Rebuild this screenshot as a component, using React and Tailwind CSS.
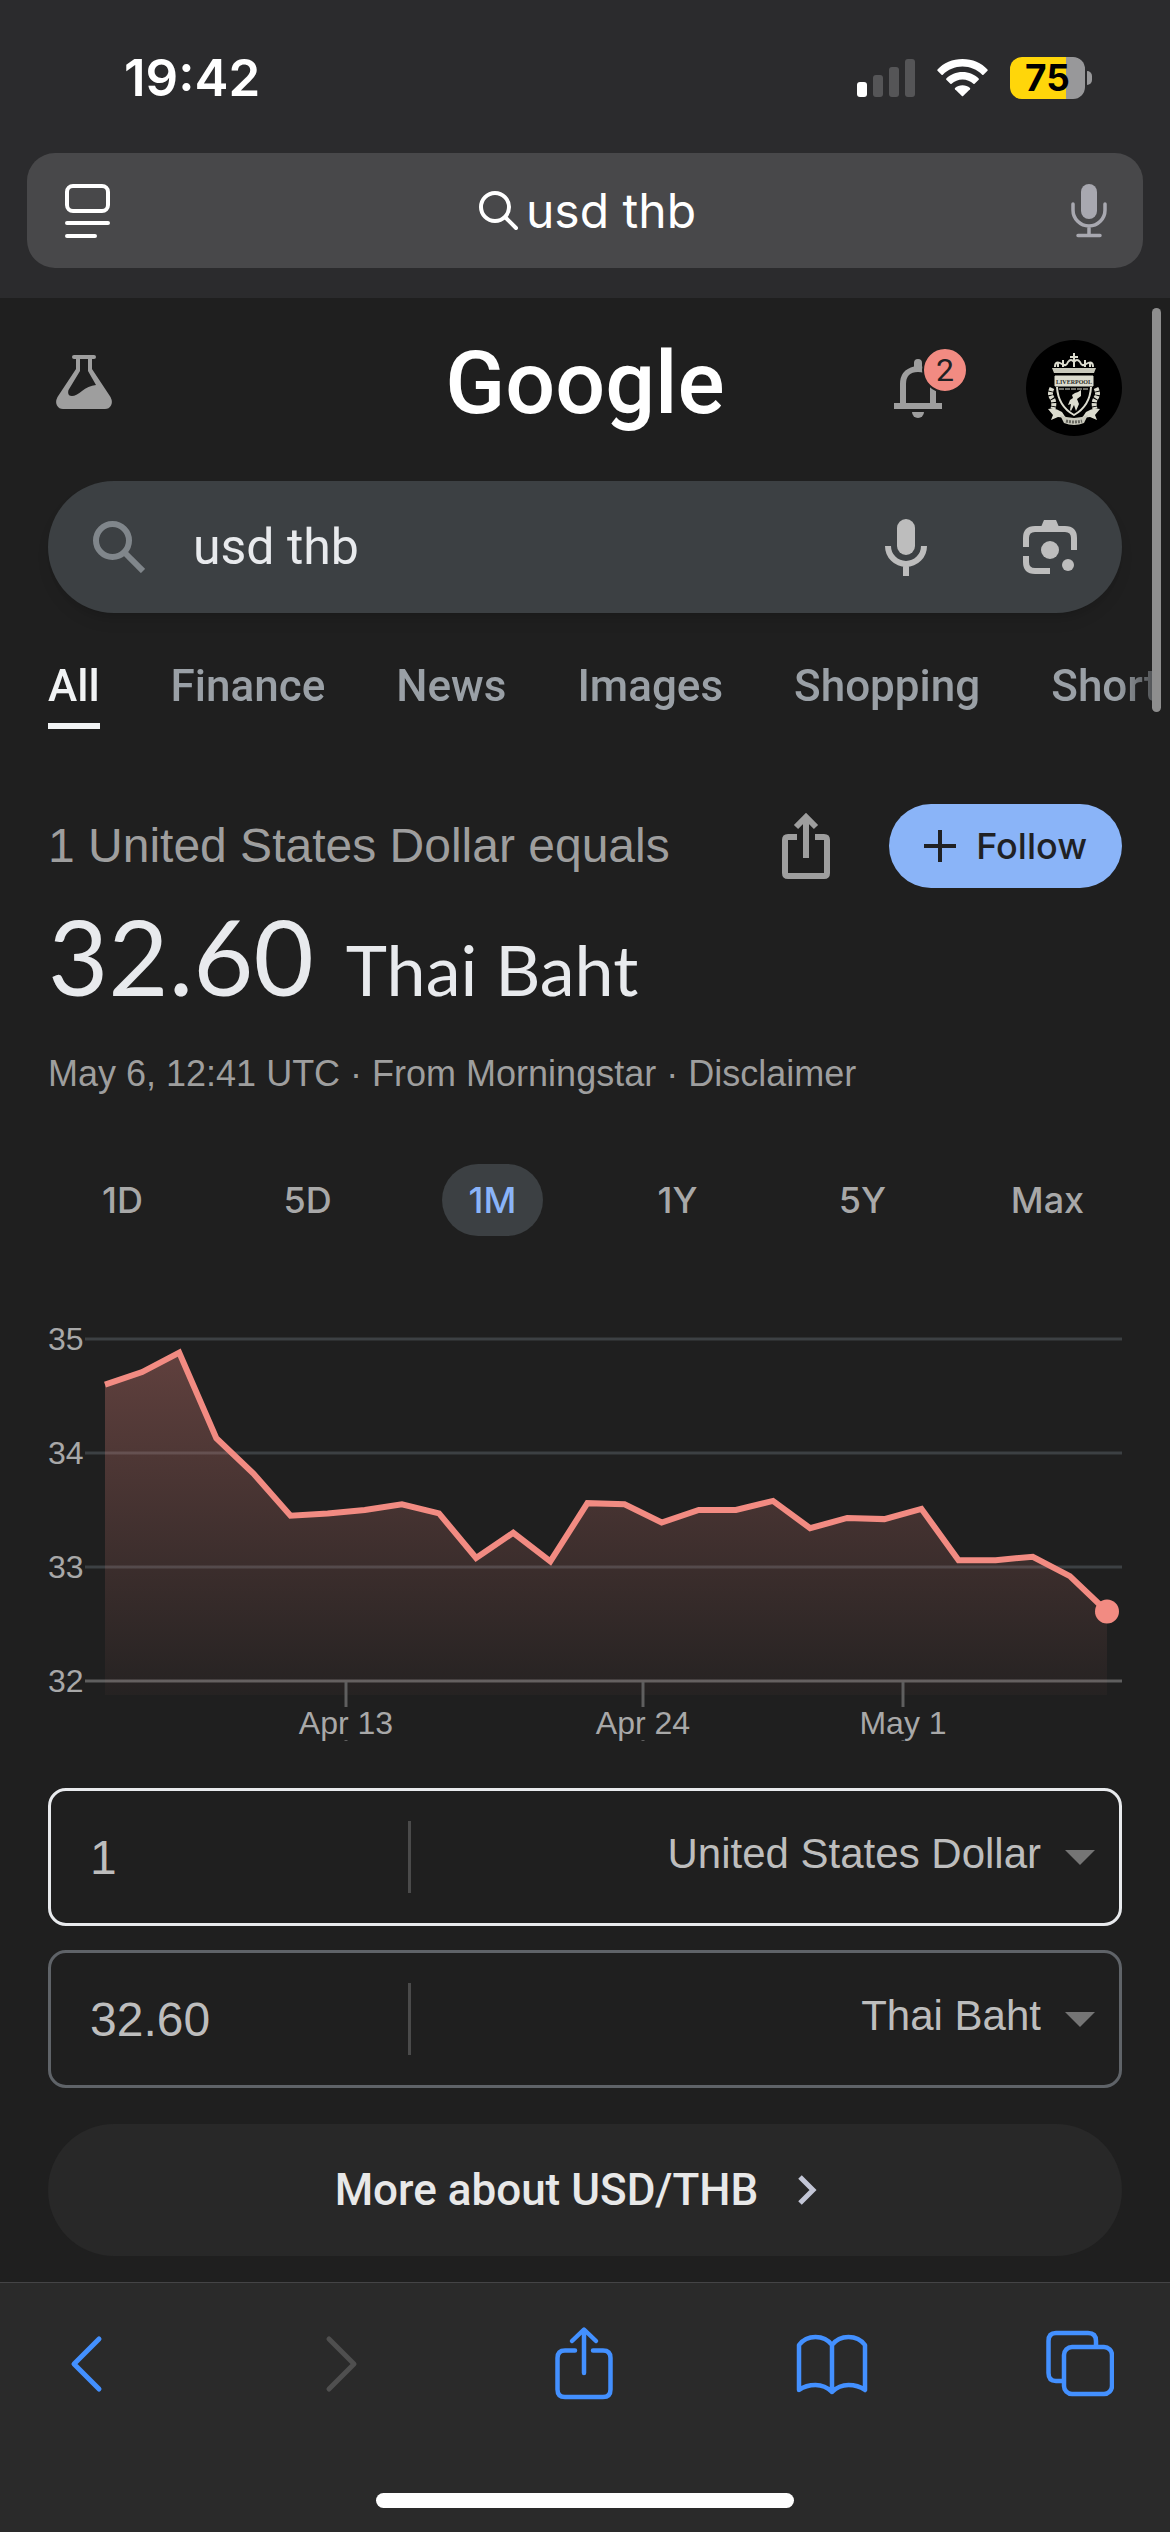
import { useState } from "react";

const tabs = ["All", "Finance", "News", "Images", "Shopping", "Short"];
const ranges = ["1D", "5D", "1M", "1Y", "5Y", "Max"];
const currencies = ["United States Dollar", "Thai Baht", "Euro", "Japanese Yen"];

const rates = [
  34.6, 34.71, 34.88, 34.13, 33.82, 33.45, 33.47, 33.5, 33.55, 33.47, 33.08, 33.3, 33.05, 33.56,
  33.55, 33.39, 33.5, 33.5, 33.58, 33.34, 33.43, 33.42, 33.51, 33.06, 33.06, 33.09, 32.92, 32.61,
];

const StatusBar = () => (
  <div className="flex items-center justify-between pt-[48px] pl-[124px] pr-[78px] h-[108px]">
    <span className="text-[51px] leading-[60px] font-semibold">19:42</span>
    <div className="flex items-center gap-[22px]">
      <svg className="w-[58px] h-[38px]" viewBox="0 0 58 38">
        <rect x="0" y="23" width="10" height="15" rx="3" fill="#fff" />
        <rect x="16" y="16" width="10" height="22" rx="3" fill="#555557" />
        <rect x="32" y="8" width="10" height="30" rx="3" fill="#555557" />
        <rect x="48" y="0" width="10" height="38" rx="3" fill="#555557" />
      </svg>
      <svg className="w-[51px] h-[38px]" viewBox="0 0 51 38" fill="#fff">
        <path d="M25.500 0C35.500 0 44.500 4 50.500 10.500Q51 11.200 50.500 11.800L46.500 15.800Q45.800 16.300 45.200 15.700C40 10.700 33 7.600 25.500 7.600S11 10.700 5.800 15.700Q5.200 16.300 4.500 15.800L0.500 11.800Q0 11.200 0.500 10.500C6.500 4 15.500 0 25.500 0Z" />
        <path d="M25.500 13C32 13 37.500 15.500 41.700 19.500Q42.200 20.200 41.700 20.800L37.600 24.800Q37 25.300 36.400 24.800C33.500 22.200 29.700 20.600 25.500 20.600S17.500 22.200 14.600 24.800Q14 25.300 13.400 24.800L9.300 20.800Q8.800 20.200 9.300 19.500C13.500 15.500 19 13 25.500 13Z" />
        <path d="M25.500 26.200C28.400 26.200 31 27.200 33 29Q33.500 29.700 33 30.300L26.100 37.100Q25.500 37.600 24.900 37.100L18 30.300Q17.500 29.700 18 29C20 27.200 22.600 26.200 25.500 26.200Z" />
      </svg>
      <div className="flex items-center gap-[2px]">
        <div className="flex w-[75px] h-[42px] items-center justify-center rounded-[12px] bg-[linear-gradient(90deg,#ffd60a_75%,#98989a_75%)]">
          <span className="text-[37px] leading-[42px] font-bold text-black">75</span>
        </div>
        <div className="w-[5px] h-[14px] rounded-r-full bg-[#98989a]" />
      </div>
    </div>
  </div>
);

const AddressBar = () => (
  <div className="mx-[27px] mt-[45px] flex h-[115px] items-center justify-between rounded-[28px] bg-[#48484a] px-[36px]">
    <button aria-label="Page menu">
      <svg className="w-[48px] h-[56px]" viewBox="0 0 48 56" fill="none" stroke="#fff" strokeWidth="4" strokeLinecap="round">
        <rect x="4" y="3" width="41" height="25" rx="6" />
        <path d="M4 40H45M4 53H32" />
      </svg>
    </button>
    <button className="flex items-center gap-[6px] pr-[8px]">
      <svg className="w-[42px] h-[42px]" viewBox="0 0 42 42" fill="none" stroke="#fff" strokeWidth="4" strokeLinecap="round">
        <circle cx="17" cy="17" r="14" />
        <path d="M27.500 27.500L38 38" />
      </svg>
      <span className="text-[48px] leading-[60px]">usd thb</span>
    </button>
    <button aria-label="Dictate">
      <svg className="w-[36px] h-[54px]" viewBox="0 0 36 54" fill="none" stroke="#a8a8b0" strokeWidth="3.500" strokeLinecap="round">
        <rect x="10" y="0" width="16" height="35" rx="8" fill="#a8a8b0" stroke="none" />
        <path d="M2 20V26A16 16 0 0 0 34 26V20M18 43V51M7 51.500H29" />
      </svg>
    </button>
  </div>
);

const Crest = () => (
  <svg className="w-[96px] h-[96px] rounded-full bg-black" viewBox="0 0 96 96" fill="none" stroke="#dcdccf">
    <path d="M26 28H70L68 33H28Z" fill="#c9c9bc" stroke="none" />
    <path d="M29 27Q29 20 36 24Q40 27 42 22Q45 18 48 22Q51 18 54 22Q56 27 60 24Q67 20 67 27" strokeWidth="2" />
    <path d="M48 13V27M44 17H52M37 20V27M59 20V27M32 23V27M64 23V27" strokeWidth="2" />
    <path d="M29 36H67V46H29Z" fill="#dcdccf" strokeWidth="1" />
    <text x="48" y="44" textAnchor="middle" fill="#2c2c28" stroke="none" fontSize="6" fontWeight="700" fontFamily="Liberation Serif, serif">LIVERPOOL</text>
    <path d="M31 47Q32 66 48 75Q64 66 65 47" strokeWidth="2" />
    <path d="M33 49H63" strokeWidth="1" strokeDasharray="5 1" />
    <path d="M52 52L55 50L55 56L51 59L53 64L50 71L48 65L45 71L44 70L45 64L42 65L44 60L47 58L46 55L49 53Z" fill="#dcdccf" stroke="none" />
    <path d="M26 48Q23 54 26 58T27 69M70 48Q73 54 70 58T69 69" strokeWidth="5" strokeDasharray="3 1" />
    <path d="M22 69Q29 67 36 72L40 78L32 77L25 80L27 75ZM74 69Q67 67 60 72L56 78L64 77L71 80L69 75Z" fill="#dcdccf" stroke="none" />
    <path d="M34 75Q48 81 62 75L58 83Q48 87 38 83Z" fill="#c9c9bc" stroke="none" />
    <path d="M40 81Q48 83 56 81" stroke="#66665f" strokeWidth="3" strokeDasharray="2 1" />
  </svg>
);

const GoogleHeader = () => (
  <header className="grid grid-cols-[1fr_auto_1fr] items-center pt-[42px]">
    <button aria-label="Search Labs" className="ml-[8px] w-[56px] pb-[12px]">
      <svg className="w-[56px] h-[54px]" viewBox="0 0 56 54" fill="#9e9e9e">
        <path d="M18 0H38Q40 0 40 2T38 4H36V14L54.500 42Q57 47 55 50.500T49 54H7Q3 54 1 50.500T1.500 42L20 14V4H18Q16 4 16 2T18 0ZM24 4V16L12.500 35Q11 41 16 41Q20 41 26 36T40 30L32 16V4Z" fillRule="evenodd" />
      </svg>
    </button>
    <a href="#home" className="pb-[10px] font-[Roboto,sans-serif] text-[88px] leading-[86px] font-medium text-white">Google</a>
    <div className="flex items-center justify-end gap-[60px]">
      <button aria-label="2 notifications" className="relative">
        <svg className="w-[72px] h-[70px]" viewBox="0 0 72 70" fill="#9e9e9e">
          <path d="M20 13.500V10A4 4 0 0 1 28 10V13.500Q42 17 42 31V50H48V56H0V50H6V31Q6 17 20 13.500ZM12 50H36V31Q36 19 24 19T12 31Z" fillRule="evenodd" />
          <path d="M18 59H30A6 6 0 0 1 18 59Z" />
        </svg>
        <span className="absolute -top-[6px] -right-[2px] flex size-[46px] items-center justify-center rounded-full border-[2px] border-[#1f1f1f] bg-[#f28b82] font-[Roboto,sans-serif] text-[32px] leading-[42px] text-[#202124]">2</span>
      </button>
      <button aria-label="Account">
        <Crest />
      </button>
    </div>
  </header>
);

const SearchBox = () => {
  const [query, setQuery] = useState("usd thb");

  return (
    <form className="mt-[45px] flex h-[132px] items-center rounded-full bg-[#3c4043] px-[45px] shadow-lg" onSubmit={(e) => e.preventDefault()}>
      <button aria-label="Search">
        <svg className="w-[52px] h-[52px]" viewBox="0 0 52 52" fill="none" stroke="#80868b" strokeWidth="6">
          <circle cx="19.500" cy="19.500" r="16.500" />
          <path d="M32.500 32.500L50 50" />
        </svg>
      </button>
      <input
        aria-label="Search query"
        className="ml-[48px] min-w-0 flex-1 bg-transparent font-[Roboto,sans-serif] text-[50px] leading-[60px] text-[#e8eaed] outline-none"
        value={query}
        onChange={(e) => setQuery(e.target.value)}
      />
      <button aria-label="Search by voice">
        <svg className="w-[42px] h-[57px]" viewBox="0 0 42 57" fill="#bdbdbd">
          <rect x="12" y="0" width="18" height="36" rx="9" />
          <path d="M3 27A18 18 0 0 0 39 27M21 45V57" fill="none" stroke="#bdbdbd" strokeWidth="6" />
        </svg>
      </button>
      <button aria-label="Search by image" className="ml-[96px]">
        <svg className="w-[54px] h-[54px]" viewBox="0 0 54 54" fill="#bdbdbd">
          <path d="M3 27V18Q3 9 12 9H42Q51 9 51 18V30M3 36V42Q3 51 12 51H27" fill="none" stroke="#bdbdbd" strokeWidth="6" />
          <path d="M18 7L21 0H33L36 7Z" />
          <circle cx="27" cy="30" r="9" />
          <circle cx="45" cy="45" r="6" />
        </svg>
      </button>
    </form>
  );
};

const ResultTabs = () => (
  <nav className="-mr-[48px] mt-[46px] flex gap-[71px] font-[Roboto,sans-serif] text-[44px] leading-[54px] font-medium whitespace-nowrap [mask-image:linear-gradient(90deg,#000_1070px,transparent_1130px)]">
    {tabs.map((tab, i) => (
      <a
        key={tab}
        href="#results"
        className={i === 0 ? "border-b-[6px] border-[#f1f3f4] pb-[10px] text-[#f1f3f4]" : "text-[#9aa0a6]"}
      >
        {tab}
      </a>
    ))}
  </nav>
);

const Quote = () => (
  <section>
    <div className="flex items-center">
      <h2 className="flex-1 font-[Liberation_Sans,Arial,sans-serif] text-[48px] leading-[60px] text-[#9e9e9e]">1 United States Dollar equals</h2>
      <button aria-label="Share" className="mr-[59px]">
        <svg className="w-[48px] h-[66px]" viewBox="0 0 48 66" fill="none" stroke="#9e9e9e" strokeWidth="6">
          <path d="M15 24H6Q3 24 3 27V60Q3 63 6 63H42Q45 63 45 60V27Q45 24 42 24H33M24 45V6M14 14L24 4L34 14" />
        </svg>
      </button>
      <button className="flex h-[84px] items-center gap-[20px] rounded-full bg-[#8ab4f8] px-[35px] text-[#202124]">
        <svg className="w-[32px] h-[32px]" viewBox="0 0 32 32" stroke="currentColor" strokeWidth="4">
          <path d="M16 0V32M0 16H32" />
        </svg>
        <span className="text-[36px] leading-[42px] font-medium">Follow</span>
      </button>
    </div>
    <p className="mt-[14px] flex h-[110px] items-baseline gap-[32px] font-[Lato,sans-serif] text-[#e8eaed]">
      <span className="text-[104px] leading-[108px]">32.60</span>
      <span className="text-[70px] leading-[72px]">Thai Baht</span>
    </p>
    <p className="mt-[38px] font-[Liberation_Sans,Arial,sans-serif] text-[36px] leading-[48px] text-[#9e9e9e]">
      May 6, 12:41 UTC · From Morningstar · <a href="#disclaimer">Disclaimer</a>
    </p>
  </section>
);

const RangePicker = () => {
  const [active, setActive] = useState("1M");

  return (
    <div className="-mx-[18px] mt-[66px] grid grid-cols-6 justify-items-center">
      {ranges.map((range) => (
        <button
          key={range}
          onClick={() => setActive(range)}
          className={`h-[72px] rounded-full px-[27px] text-[36px] leading-[42px] font-medium ${
            range === active ? "bg-[#3c4043] text-[#8ab4f8]" : "text-[#a8a8a8]"
          }`}
        >
          {range}
        </button>
      ))}
    </div>
  );
};

const RateChart = () => {
  const x = (i) => 57 + (i * 1002) / (rates.length - 1);
  const y = (rate) => 19 + (35 - rate) * 114;
  const line = rates.map((rate, i) => `${x(i)},${y(rate)}`).join(" ");
  const last = rates.length - 1;

  return (
    <svg className="mt-[84px] w-full font-[Liberation_Sans,Arial,sans-serif] text-[32px]" viewBox="0 0 1074 432" role="img" aria-label="USD to THB, last month">
      <defs>
        <linearGradient id="area" gradientUnits="userSpaceOnUse" x1="0" x2="0" y1="30" y2="375">
          <stop offset="0" stopColor="#f28b82" stopOpacity="0.31" />
          <stop offset="1" stopColor="#f28b82" stopOpacity="0.03" />
        </linearGradient>
      </defs>
      {[35, 34, 33, 32].map((rate) => (
        <g key={rate}>
          <path d={`M37 ${y(rate)}H1074`} stroke={rate === 32 ? "#5f5f5f" : "#3c4043"} strokeWidth="3" />
          <text x="0" y={y(rate) + 11} fill="#a8a8a8">{rate}</text>
        </g>
      ))}
      <polygon points={`57,375 ${line} 1059,375`} fill="url(#area)" />
      <polyline points={line} fill="none" stroke="#f28b82" strokeWidth="6" />
      <circle cx={x(last)} cy={y(rates[last])} r="12" fill="#f28b82" />
      {[["Apr 13", 298], ["Apr 24", 595], ["May 1", 855]].map(([label, pos]) => (
        <g key={label}>
          <path d={`M${pos} 362V387M${pos} 420V421`} stroke="#5f5f5f" strokeWidth="3" />
          <text x={pos} y="414" textAnchor="middle" fill="#a8a8a8">{label}</text>
        </g>
      ))}
    </svg>
  );
};

const ConverterRow = ({ amount, currency, focused }) => {
  const [value, setValue] = useState(amount);

  return (
    <div className={`flex h-[138px] items-center rounded-[18px] border-[3px] font-[Liberation_Sans,Arial,sans-serif] text-[#bdbdbd] ${focused ? "border-[#e8eaed]" : "border-[#5f6368]"}`}>
      <input
        aria-label={`Amount in ${currency}`}
        className="h-[72px] w-[360px] min-w-0 border-r-[3px] border-[#4a4a4a] bg-transparent pl-[39px] text-[48px] leading-[60px] outline-none"
        value={value}
        onChange={(e) => setValue(e.target.value)}
      />
      <select
        aria-label="Currency"
        defaultValue={currency}
        className="min-w-0 flex-1 appearance-none bg-transparent pb-[6px] text-right text-[42px] leading-[48px] outline-none [text-align-last:right]"
      >
        {currencies.map((name) => (
          <option key={name}>{name}</option>
        ))}
      </select>
      <svg className="ml-[24px] mr-[24px] w-[30px] h-[15px]" viewBox="0 0 30 15" fill="#757575">
        <path d="M0 0H30L15 15Z" />
      </svg>
    </div>
  );
};

const Toolbar = () => (
  <footer className="flex flex-1 flex-col justify-between border-t border-[#444446] bg-[#2a2a2a] pb-[24px]">
    <div className="flex items-center justify-between pt-[42px] pl-[51px] pr-[54px] text-[#4390ff]">
      <button aria-label="Back" className="flex w-[72px] justify-center">
        <svg className="w-[48px] h-[76px]" viewBox="0 0 48 76" fill="none" stroke="currentColor" strokeWidth="5" strokeLinecap="round" strokeLinejoin="round">
          <path d="M36 14L11 39L36 64" />
        </svg>
      </button>
      <button aria-label="Forward" className="flex w-[72px] justify-center text-[#4f4f4f]">
        <svg className="w-[48px] h-[76px]" viewBox="0 0 48 76" fill="none" stroke="currentColor" strokeWidth="5" strokeLinecap="round" strokeLinejoin="round">
          <path d="M18 14L43 39L18 64" />
        </svg>
      </button>
      <button aria-label="Share page" className="flex w-[72px] justify-center">
        <svg className="w-[58px] h-[76px]" viewBox="0 0 58 76" fill="none" stroke="currentColor" strokeWidth="4.500" strokeLinecap="round" strokeLinejoin="round">
          <path d="M20 25.500H10Q2.500 25.500 2.500 33V64.500Q2.500 72 10 72H48Q55.500 72 55.500 64.500V33Q55.500 25.500 48 25.500H38M29 48V5M17 16L29 4.500L41 16" />
        </svg>
      </button>
      <button aria-label="Bookmarks" className="flex w-[72px] justify-center">
        <svg className="w-[72px] h-[76px]" viewBox="0 0 72 76" fill="none" stroke="currentColor" strokeWidth="4.500" strokeLinecap="round" strokeLinejoin="round">
          <path d="M36 20Q30 12 19.500 12T3 20V65Q10 60 19.500 60T36 67Q43 60 52.500 60T69 65V20Q63 12 52.500 12T36 20V67" />
        </svg>
      </button>
      <button aria-label="Tabs" className="flex w-[72px] justify-center">
        <svg className="w-[68px] h-[76px]" viewBox="0 0 68 76" fill="none" stroke="currentColor" strokeWidth="4.500">
          <rect x="18" y="22" width="48" height="47" rx="8" />
          <path d="M18 56H10Q2.500 56 2.500 48V16Q2.500 8 10 8H42Q50 8 50 16V22" />
        </svg>
      </button>
    </div>
    <div className="h-[15px] w-[418px] self-center rounded-full bg-white" />
  </footer>
);

export default function App() {
  return (
    <div className="relative flex min-h-screen flex-col overflow-hidden bg-[#1f1f1f] font-[Inter,sans-serif] text-white">
      <div className="bg-[#2b2b2d] pb-[30px]">
        <StatusBar />
        <AddressBar />
      </div>
      <div className="absolute top-[308px] right-[9px] z-10 h-[404px] w-[9px] rounded-full bg-[#8e8e8e]" />
      <main className="px-[48px] pb-[26px]">
        <GoogleHeader />
        <SearchBox />
        <ResultTabs />
        <div className="mt-[75px]">
          <Quote />
          <RangePicker />
          <RateChart />
          <div className="mt-[36px] flex flex-col gap-[24px]">
            <ConverterRow amount="1" currency="United States Dollar" focused />
            <ConverterRow amount="32.60" currency="Thai Baht" />
          </div>
          <button className="mt-[36px] flex h-[132px] w-full items-center justify-center gap-[40px] rounded-full bg-[#282828] pr-[18px] font-[Roboto,sans-serif] text-[44px] leading-[48px] font-medium text-[#e8e8e8]">
            More about USD/THB
            <svg className="w-[19px] h-[30px]" viewBox="0 0 19 30" fill="none" stroke="#c3c6d6" strokeWidth="5">
              <path d="M2 2L15 15L2 28" />
            </svg>
          </button>
        </div>
      </main>
      <Toolbar />
    </div>
  );
}
